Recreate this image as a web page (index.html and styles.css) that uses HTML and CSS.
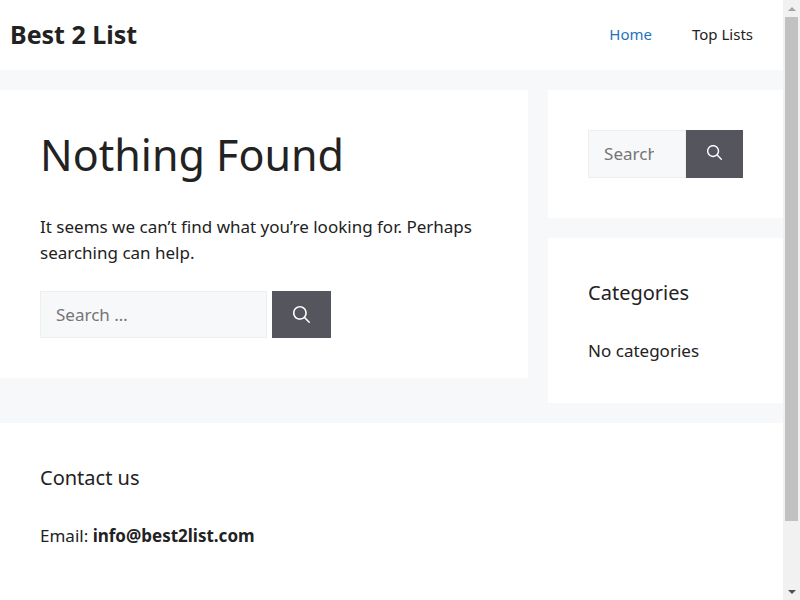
FILE: index.html
```
<!DOCTYPE html>
<html lang="en">

<head>
    <meta charset="UTF-8">
    <meta name="viewport" content="width=device-width, initial-scale=1.0">
    <title>Nothing Found - Best 2 List</title>
    <link rel="stylesheet" href="styles.css">
</head>

<body>

    <div class="page">
        <header class="site-header">
            <a class="site-title" href="#">Best 2 List</a>
            <nav class="main-nav">
                <a class="current" href="#">Home</a>
                <a href="#">Top Lists</a>
            </nav>
        </header>

        <div class="site-content">
            <main class="card content">
                <h1>Nothing Found</h1>
                <p>It seems we can’t find what you’re looking for. Perhaps searching can help.</p>
                <form class="search-form">
                    <input type="search" placeholder="Search …" aria-label="Search for:">
                    <button type="submit" aria-label="Search">
                        <svg viewBox="0 0 512 512" aria-hidden="true"><path fill-rule="evenodd" clip-rule="evenodd" d="M208 48c-88.366 0-160 71.634-160 160s71.634 160 160 160 160-71.634 160-160S296.366 48 208 48zM0 208C0 93.125 93.125 0 208 0s208 93.125 208 208c0 48.741-16.765 93.566-44.843 129.024l133.826 134.018c9.366 9.379 9.355 24.575-.025 33.941-9.379 9.366-24.575 9.355-33.941-.025L337.238 370.987C301.747 399.167 256.839 416 208 416 93.125 416 0 322.875 0 208z"/></svg>
                    </button>
                </form>
            </main>

            <aside class="sidebar">
                <div class="card">
                    <form class="search-form widget-search">
                        <input type="search" placeholder="Search …" aria-label="Search for:">
                        <button type="submit" aria-label="Search">
                            <svg viewBox="0 0 512 512" aria-hidden="true"><path fill-rule="evenodd" clip-rule="evenodd" d="M208 48c-88.366 0-160 71.634-160 160s71.634 160 160 160 160-71.634 160-160S296.366 48 208 48zM0 208C0 93.125 93.125 0 208 0s208 93.125 208 208c0 48.741-16.765 93.566-44.843 129.024l133.826 134.018c9.366 9.379 9.355 24.575-.025 33.941-9.379 9.366-24.575 9.355-33.941-.025L337.238 370.987C301.747 399.167 256.839 416 208 416 93.125 416 0 322.875 0 208z"/></svg>
                        </button>
                    </form>
                </div>
                <div class="card">
                    <h2>Categories</h2>
                    <p>No categories</p>
                </div>
            </aside>
        </div>

        <footer class="site-footer">
            <h2>Contact us</h2>
            <p>Email: <strong>info@best2list.com</strong></p>
        </footer>
    </div>

    <div class="scrollbar" aria-hidden="true">
        <span class="arrow up"></span>
        <div class="track">
            <div class="thumb"></div>
        </div>
        <span class="arrow down"></span>
    </div>

</body>

</html>
```
FILE: styles.css
```
* {
    box-sizing: border-box;
}

body {
    margin: 0;
    display: flex;
    height: 100vh;
    overflow: hidden;
    background-color: #f7f8f9;
    color: #222222;
    font-family: "Segoe UI", "Noto Sans", sans-serif;
    font-size: 17px;
    line-height: 26px;
}

h1, h2, p {
    margin: 0;
    font-weight: 400;
}

a {
    color: #222222;
    text-decoration: none;
}

.page {
    flex: 1;
    min-width: 0;
    display: flex;
    flex-direction: column;
    overflow: hidden;
}

/* Header */
.site-header {
    display: flex;
    align-items: center;
    justify-content: space-between;
    min-height: 70px;
    padding: 0 30px 2px 10px;
    background-color: #ffffff;
}

.site-title {
    font-size: 25px;
    font-weight: 700;
}

.main-nav {
    display: flex;
    gap: 40px;
    font-size: 15px;
}

.main-nav .current {
    color: #1e73be;
}

/* Content and sidebar */
.site-content {
    display: grid;
    grid-template-columns: minmax(0, 7fr) minmax(0, 3fr);
    align-items: start;
    padding: 20px 0;
}

.card {
    padding: 40px;
    background-color: #ffffff;
}

.content {
    margin-right: 20px;
}

.content h1 {
    margin-bottom: 34px;
    font-size: 43px;
    line-height: 50px;
}

.content p {
    margin-bottom: 25px;
}

.sidebar {
    display: grid;
    grid-template-columns: minmax(0, 1fr);
    gap: 20px;
}

.sidebar p {
    line-height: 25px;
}

h2 {
    margin-bottom: 30px;
    font-size: 20px;
    line-height: 30px;
}

.search-form {
    display: flex;
    gap: 5px;
    height: 47px;
}

.search-form input {
    width: 227px;
    min-width: 0;
    padding: 10px 15px;
    border: 1px solid #eeeeee;
    border-radius: 0;
    background-color: #f7f8f9;
    color: #666666;
    font: inherit;
    appearance: none;
}

.search-form input::placeholder {
    color: #757575;
}

.search-form button {
    display: flex;
    align-items: center;
    justify-content: center;
    flex: none;
    width: 59px;
    padding: 0;
    border: none;
    background-color: #55555e;
    cursor: pointer;
}

.search-form svg {
    width: 17px;
    height: 17px;
    fill: #ffffff;
}

.widget-search {
    gap: 0;
    height: 48px;
}

.widget-search input {
    flex: 1;
}

.widget-search button {
    width: 57px;
    padding-bottom: 3px;
}

.widget-search svg {
    width: 15px;
    height: 15px;
}

/* Footer */
.site-footer {
    flex: 1;
    padding: 40px;
    background-color: #ffffff;
}

/* Scrollbar */
.scrollbar {
    display: flex;
    flex-direction: column;
    width: 17px;
    padding: 0 2px;
    background-color: #f1f1f1;
}

.track {
    flex: 1;
}

.thumb {
    height: 89%;
    background-color: #c1c1c1;
}

.arrow {
    display: flex;
    align-items: center;
    justify-content: center;
    height: 17px;
}

.arrow::before {
    content: "";
    border: 4px solid transparent;
}

.up::before {
    border-top: none;
    border-bottom-color: #a3a3a3;
}

.down::before {
    border-bottom: none;
    border-top-color: #505050;
}
```
